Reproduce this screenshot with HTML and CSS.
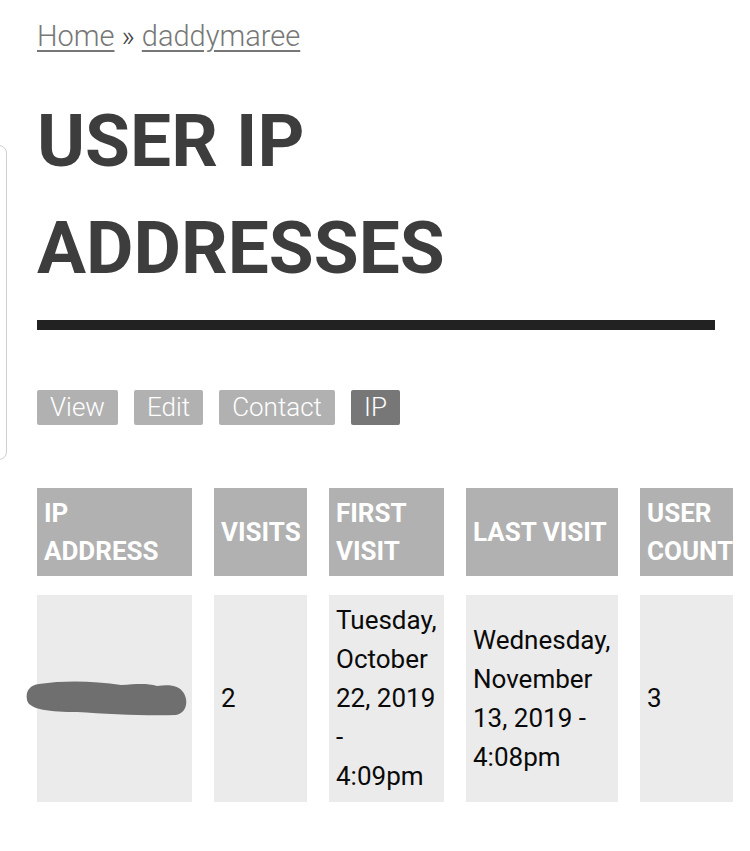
FILE: index.html
```html
<!DOCTYPE html>
<html lang="en">
<head>
    <meta charset="UTF-8">
    <meta name="viewport" content="width=device-width, initial-scale=1.0">
    <title>User IP addresses | daddymaree</title>
    <link rel="stylesheet" href="styles.css">
</head>
<body>

<div class="drawer-handle"></div>

<div class="page">
    <nav class="breadcrumb">
        <a href="#">Home</a> <span class="sep">»</span> <a href="#">daddymaree</a>
    </nav>

    <h1 class="page-title">User IP addresses</h1>
    <div class="title-rule"></div>

    <ul class="tabs">
        <li><a href="#">View</a></li>
        <li><a href="#">Edit</a></li>
        <li><a href="#">Contact</a></li>
        <li><a href="#" class="active">IP</a></li>
    </ul>

    <div class="table-wrap">
        <table class="ip-table">
            <colgroup>
                <col class="col-ip">
                <col class="col-visits">
                <col class="col-first">
                <col class="col-last">
                <col class="col-count">
            </colgroup>
            <thead>
                <tr>
                    <th>IP Address</th>
                    <th>Visits</th>
                    <th>First visit</th>
                    <th>Last visit</th>
                    <th>User count</th>
                </tr>
            </thead>
            <tbody>
                <tr>
                    <td class="ip-cell">
                        <span class="ip-text">000.00.00.0</span>
                        <!-- scribbled over in the screenshot -->
                        <svg class="redact" width="164" height="38" viewBox="0 0 164 38">
                            <path d="M14,4 C40,0 70,1 96,5 C112,4 122,3 132,6 C146,4 154,6 158,12 C164,20 162,33 151,35 C121,36 82,34 52,32 C26,32 4,30 2,20 C0,10 6,5 14,4 Z" fill="#6f6f6f"/>
                        </svg>
                    </td>
                    <td>2</td>
                    <td>Tuesday, October 22, 2019 - 4:09pm</td>
                    <td>Wednesday, November 13, 2019 - 4:08pm</td>
                    <td>3</td>
                </tr>
            </tbody>
        </table>
    </div>
</div>

</body>
</html>
```

FILE: styles.css
```css
body {
    margin: 0;
    font-family: Roboto, "Liberation Sans", Arial, sans-serif;
    background-color: #fff;
    color: #111;
}
.page {
    width: 678px;
    padding: 16px 0 40px 37px;
}
.drawer-handle {
    position: absolute;
    left: -30px;
    top: 145px;
    width: 35px;
    height: 313px;
    border: 1.5px solid #cfcfcf;
    border-radius: 8px;
}
.breadcrumb {
    font-size: 29px;
    font-weight: 300;
    line-height: 40px;
    color: #777;
}
.breadcrumb a {
    color: #777;
    text-decoration: underline;
    text-underline-offset: 4px;
}
.breadcrumb .sep {
    color: #444;
}
.page-title {
    margin: 32px 0 0;
    font-size: 73px;
    font-weight: 700;
    line-height: 107px;
    text-transform: uppercase;
    color: #3d3d3d;
}
.title-rule {
    height: 10px;
    margin-top: 18px;
    background-color: #222;
}
.tabs {
    display: flex;
    gap: 16px;
    margin: 60px 0 0;
    padding: 0;
    list-style: none;
}
.tabs a {
    display: block;
    padding: 0 13px;
    font-size: 26px;
    font-weight: 300;
    line-height: 35px;
    color: #fff;
    text-decoration: none;
    background-color: #b1b1b1;
    border-radius: 2px;
}
.tabs a.active {
    background-color: #777;
}
.table-wrap {
    margin: 44px -18px 0 -37px;
    padding-left: 15px;
    overflow: hidden;
}
.ip-table {
    width: 747px;
    table-layout: fixed;
    border-collapse: separate;
    border-spacing: 22px 19px;
}
.col-ip { width: 155px; }
.col-visits { width: 93px; }
.col-first { width: 115px; }
.col-last { width: 152px; }
.col-count { width: 100px; }
.ip-table th,
.ip-table td {
    padding: 6px 7px;
    text-align: left;
    vertical-align: middle;
}
.ip-table th {
    font-size: 26px;
    font-weight: 700;
    line-height: 38px;
    text-transform: uppercase;
    color: #fff;
    background-color: #b1b1b1;
}
.ip-table td {
    font-size: 26px;
    line-height: 39px;
    color: #0a0a0a;
    background-color: #ebebeb;
}
.ip-cell {
    position: relative;
}
.ip-text {
    white-space: nowrap;
}
.redact {
    position: absolute;
    left: -12px;
    top: calc(50% - 19px);
}
```
